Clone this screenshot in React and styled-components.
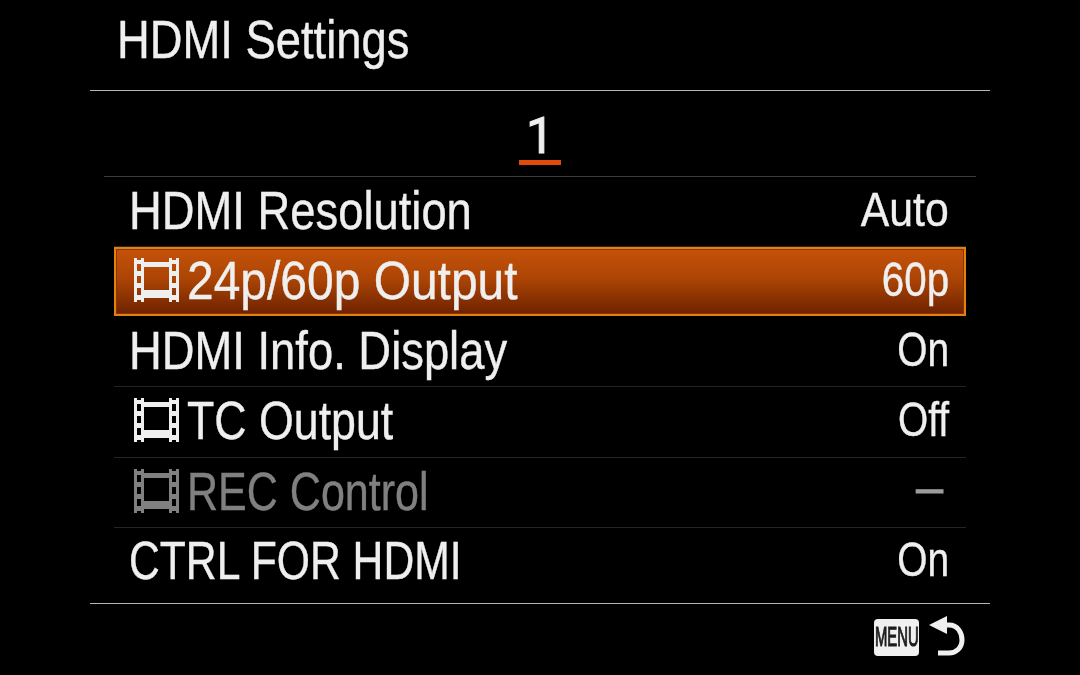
import styled, { createGlobalStyle } from 'styled-components'

const Global = createGlobalStyle`
  html, body { margin: 0; padding: 0; background: #000; }
  body { font-family: "Liberation Sans", Arial, sans-serif; }
`

const Screen = styled.div`
  width: 1080px;
  height: 675px;
  overflow: hidden;
  background: #000;
  color: #efefef;
  display: flex;
  flex-direction: column;
  align-items: center;
`

const Header = styled.header`
  width: 900px;
  height: 91px;
  box-sizing: border-box;
  padding: 9px 0 0 27px;
  border-bottom: 1px solid #b5b5b5;
  flex: none;
`

const Squeezed = styled.span`
  display: inline-block;
  white-space: nowrap;
  line-height: 60px;
  font-size: 54px;
  -webkit-text-stroke: 0.4px currentColor;
  filter: blur(0.35px);
  transform: scaleX(${p => p.$squeeze || 0.84});
  transform-origin: ${p => (p.$right ? 'right' : 'left')} center;
`

const PageTabs = styled.div`
  width: 872px;
  height: 86px;
  box-sizing: border-box;
  border-bottom: 1px solid #3c3c3c;
  display: flex;
  justify-content: center;
  flex: none;
`

const PageTab = styled.div`
  width: 42px;
  height: 74px;
  box-sizing: border-box;
  border-bottom: 5px solid #e04a0c;
  text-align: center;
  font-family: Roboto, sans-serif;
  font-size: 50px;
  line-height: 90px;
  -webkit-text-stroke: 1px currentColor;
  filter: blur(0.3px);
`

const List = styled.ul`
  list-style: none;
  margin: 0;
  padding: 0;
  width: 852px;
  flex: none;
`

const Row = styled.li`
  height: ${p => p.$h}px;
  box-sizing: border-box;
  display: flex;
  align-items: center;
  justify-content: space-between;
  padding: 0 17px ${p => p.$lift}px 15px;
  color: ${p => (p.$dim ? '#808080' : 'inherit')};
  border-bottom: 1px solid ${p => (p.$active || p.$noLine ? 'transparent' : '#242424')};
  ${p =>
    p.$active &&
    `
    padding: 0 15px ${p.$lift}px 13px;
    border: 2px solid #e5800f;
    box-shadow: inset 0 0 0 1px #8a3500;
    background: linear-gradient(180deg, #c4520a 0%, #ad4505 45%, #6e2200 100%);
  `}
`

const Label = styled.div`
  display: flex;
  align-items: center;
  gap: 8px;
`

const Value = styled(Squeezed)`
  font-size: 48px;
`

const Dash = styled(Value)`
  color: #9c9c9c;
  -webkit-text-stroke: 1.2px currentColor;
  margin: 0 6px 6px 0;
`

const Icon = styled.svg`
  width: 45px;
  height: 44px;
  margin-left: 5px;
  flex: none;
  filter: blur(0.4px);
`

const Footer = styled.footer`
  width: 900px;
  flex: none;
  margin-top: 6px;
  border-top: 1px solid #b5b5b5;
  display: flex;
  justify-content: flex-end;
  align-items: center;
  gap: 10px;
  padding: 11px 25px 0 0;
  box-sizing: border-box;
`

const MenuKey = styled.div`
  width: 45px;
  height: 37px;
  border-radius: 4px;
  background: #f0f0f0;
  color: #1c1c1c;
  font-size: 27px;
  line-height: 37px;
  text-align: center;
  overflow: hidden;
  -webkit-text-stroke: 1.1px currentColor;
  span {
    display: inline-block;
    transform: scaleX(0.55);
    transform-origin: center;
    margin: 0 -30px;
  }
`

function FilmIcon() {
  return (
    <Icon viewBox="0 0 45 44" fill="currentColor">
      <path
        fillRule="evenodd"
        d="M0 0h3v2h4V0h3v4h25V0h3v2h4V0h3v44h-3v-2h-4v2h-3v-4H10v4H7v-2H3v2H0z M3 6v7h4V6z M3 18v7h4v-7z M3 30v7h4v-7z M38 6v7h4V6z M38 18v7h4v-7z M38 30v7h4v-7z M10 9v23h25V9z"
      />
    </Icon>
  )
}

function BackArrow() {
  return (
    <svg width="36" height="44" viewBox="0 0 36 44" fill="none">
      <path d="M0 10 L18 1 L18 19 Z" fill="#f0f0f0" />
      <path d="M14 10 H20 C29 10 33 18 33 25 C33 33 27 38 20 38 H9" stroke="#f0f0f0" strokeWidth="5" />
    </svg>
  )
}

const rows = [
  { label: 'HDMI Resolution', value: 'Auto', h: 70, lift: 4, vs: 0.891 },
  { label: '24p/60p Output', value: '60p', film: true, active: true, h: 69, lift: 4, ls: 0.888 },
  { label: 'HDMI Info. Display', value: 'On', h: 71, lift: 2, vs: 0.81 },
  { label: 'TC Output', value: 'Off', film: true, h: 71, lift: 4, ls: 0.828, vs: 0.81 },
  { label: 'REC Control', value: '–', film: true, dim: true, h: 70, lift: 4, ls: 0.797, vs: 1 },
  { label: 'CTRL FOR HDMI', value: 'On', noLine: true, h: 69, lift: 4, ls: 0.79, vs: 0.81 },
]

export default function App() {
  return (
    <>
      <Global />
      <Screen>
        <Header>
          <Squeezed>HDMI Settings</Squeezed>
        </Header>
        <PageTabs>
          <PageTab>1</PageTab>
        </PageTabs>
        <List>
          {rows.map(row => {
            const ValueText = row.dim ? Dash : Value
            return (
              <Row key={row.label} $h={row.h} $lift={row.lift} $active={row.active} $dim={row.dim} $noLine={row.noLine}>
                <Label>
                  {row.film && <FilmIcon />}
                  <Squeezed $squeeze={row.ls}>{row.label}</Squeezed>
                </Label>
                <ValueText $right $squeeze={row.vs}>{row.value}</ValueText>
              </Row>
            )
          })}
        </List>
        <Footer>
          <MenuKey><span>MENU</span></MenuKey>
          <BackArrow />
        </Footer>
      </Screen>
    </>
  )
}
